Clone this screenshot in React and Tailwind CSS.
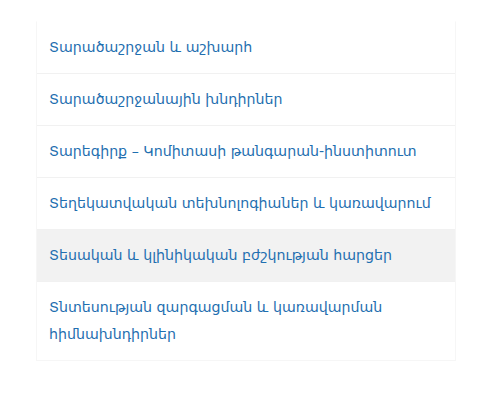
export default function App() {
  const items = [
    { t: "Տարածաշրջան և աշխարհ" },
    { t: "Տարածաշրջանային խնդիրներ" },
    { t: "Տարեգիրք – Կոմիտասի թանգարան-ինստիտուտ" },
    { t: "Տեղեկատվական տեխնոլոգիաներ և կառավարում" },
    { t: "Տեսական և կլինիկական բժշկության հարցեր", active: true },
    { t: "Տնտեսության զարգացման և կառավարման հիմնախնդիրներ" },
  ];
  return (
    <div className="w-[497px] h-[400px] bg-white pt-[21px] pl-[36px]">
      <ul className="w-[420px] border border-[#f6f6f6] border-t-white" style={{ fontFamily: '"DejaVu Sans", sans-serif' }}>
        {items.map((it, i) => (
          <li
            key={i}
            className={`px-[12px] py-[12px] text-[14.2px] leading-[27px] text-[#1f6fb0] border-b border-[#f1f1f1] last:border-b-0 ${it.active ? "bg-[#f2f2f2]" : ""}`}
          >
            {it.t}
          </li>
        ))}
      </ul>
    </div>
  );
}
